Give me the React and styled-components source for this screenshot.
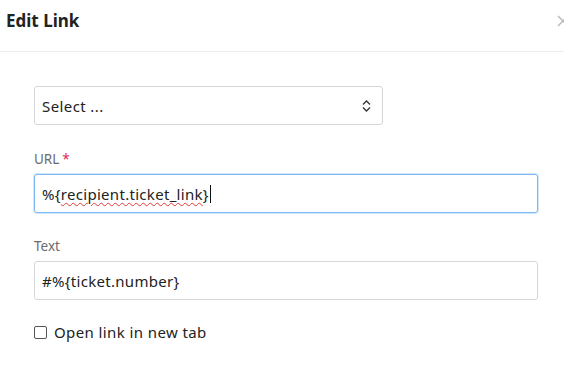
import styled, { createGlobalStyle } from "styled-components";

const GlobalStyle = createGlobalStyle`
  body {
    margin: 0;
    background: #ffffff;
    font-family: "Noto Sans", "Open Sans", sans-serif;
    color: #333;
  }
`;

const Modal = styled.div`
  width: 564px;
  height: 365px;
  overflow: hidden;
  background: #fff;
`;

const Header = styled.div`
  height: 52px;
  box-sizing: border-box;
  border-bottom: 1px solid #ececec;
  display: flex;
  align-items: flex-start;
  justify-content: space-between;
  padding: 9px 0 0 6px;
`;

const Title = styled.h3`
  margin: 0;
  font-size: 17px;
  font-weight: 700;
  color: #222;
  line-height: 24px;
`;

const Close = styled.span`
  display: flex;
  margin-top: 6px;
  margin-right: -5px;
`;

const Body = styled.div`
  padding: 34px 26px 0 34px;
  display: flex;
  flex-direction: column;
`;

const Field = styled.div`
  display: flex;
  flex-direction: column;
  margin-bottom: ${(p) => p.$gap || 0}px;
`;

const Label = styled.label`
  font-size: 13.5px;
  color: #6b6b6b;
  line-height: 18px;
  margin-bottom: 6px;
`;

const Required = styled.span`
  color: #e0245e;
  margin-left: 3px;
`;

const SelectBox = styled.div`
  width: 349px;
  height: 39px;
  box-sizing: border-box;
  border: 1px solid #d6d6d6;
  border-radius: 3px;
  display: flex;
  align-items: center;
  justify-content: space-between;
  padding: 0 11px 0 7px;
  font-size: 15px;
  letter-spacing: 0.4px;
  color: #222;
`;

const Input = styled.div`
  width: 504px;
  height: 39px;
  box-sizing: border-box;
  border: 1px solid ${(p) => (p.$focused ? "#7cb9f2" : "#d6d6d6")};
  box-shadow: ${(p) => (p.$focused ? "0 0 0 1px rgba(124,185,242,0.35)" : "none")};
  border-radius: 3px;
  display: flex;
  align-items: center;
  padding: 0 7px;
  font-size: 15px;
  letter-spacing: 0.3px;
  color: #222;
`;

const Misspelled = styled.span`
  text-decoration: underline wavy #e53935;
  text-decoration-thickness: 1px;
  text-underline-offset: 2px;
`;

const Caret = styled.span`
  display: inline-block;
  width: 1px;
  height: 18px;
  background: #111;
  margin-left: 1px;
`;

const CheckRow = styled.label`
  display: flex;
  align-items: center;
  gap: 7px;
  font-size: 15px;
  letter-spacing: 0.4px;
  color: #222;
`;

const Box = styled.span`
  width: 11px;
  height: 11px;
  border: 1px solid #555;
  border-radius: 2px;
`;

const Chevron = () => (
  <svg width="9" height="12" viewBox="0 0 9 12" fill="none" stroke="#333" strokeWidth="1.3">
    <path d="M1 4.5 L4.5 1 L8 4.5" />
    <path d="M1 7.5 L4.5 11 L8 7.5" />
  </svg>
);

const CloseIcon = () => (
  <svg width="12" height="12" viewBox="0 0 12 12" stroke="#b5b5b5" strokeWidth="1.3">
    <path d="M1 1 L11 11 M11 1 L1 11" />
  </svg>
);

export default function App() {
  return (
    <>
      <GlobalStyle />
      <Modal>
        <Header>
          <Title>Edit Link</Title>
          <Close>
            <CloseIcon />
          </Close>
        </Header>
        <Body>
          <Field $gap={25}>
            <SelectBox>
              <span>Select ...</span>
              <Chevron />
            </SelectBox>
          </Field>
          <Field $gap={24}>
            <Label>
              URL<Required>*</Required>
            </Label>
            <Input $focused>
              <span>
                %{"{"}
                <Misspelled>recipient.ticket_link</Misspelled>
                {"}"}
              </span>
              <Caret />
            </Input>
          </Field>
          <Field $gap={22}>
            <Label>Text</Label>
            <Input>#%{"{ticket.number}"}</Input>
          </Field>
          <CheckRow>
            <Box />
            Open link in new tab
          </CheckRow>
        </Body>
      </Modal>
    </>
  );
}
